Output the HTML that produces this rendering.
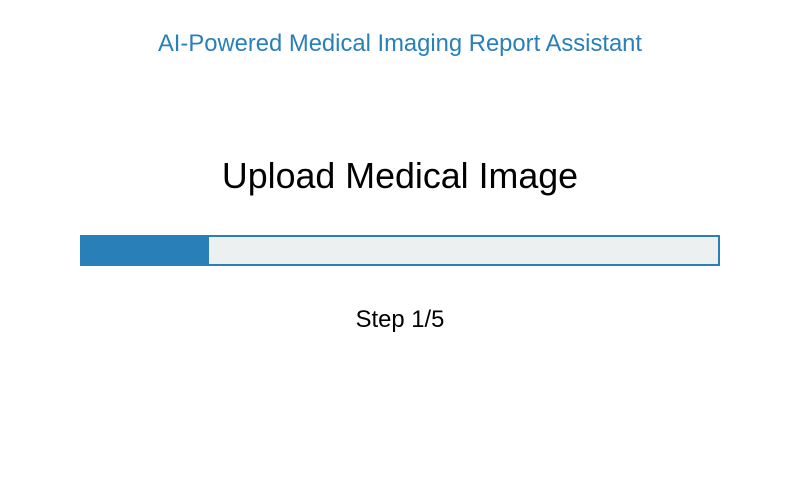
<!DOCTYPE html>
<html><head><style>
body{margin:0;width:800px;height:500px;background:#fff;font-family:"Liberation Sans",sans-serif;position:relative;overflow:hidden}
.t{position:absolute;left:0;width:800px;text-align:center}
</style></head><body>
<div class="t" style="top:30px;font-size:23.8px;color:#2980b9">AI-Powered Medical Imaging Report Assistant</div>
<div class="t" style="top:156px;font-size:35.8px;color:#000">Upload Medical Image</div>
<div style="position:absolute;left:80px;top:235px;width:636px;height:27px;border:2px solid #2980b9;background:#ecf0f1">
<div style="width:127px;height:27px;background:#2980b9"></div></div>
<div class="t" style="top:306px;font-size:23.8px;color:#000">Step 1/5</div>
</body></html>
